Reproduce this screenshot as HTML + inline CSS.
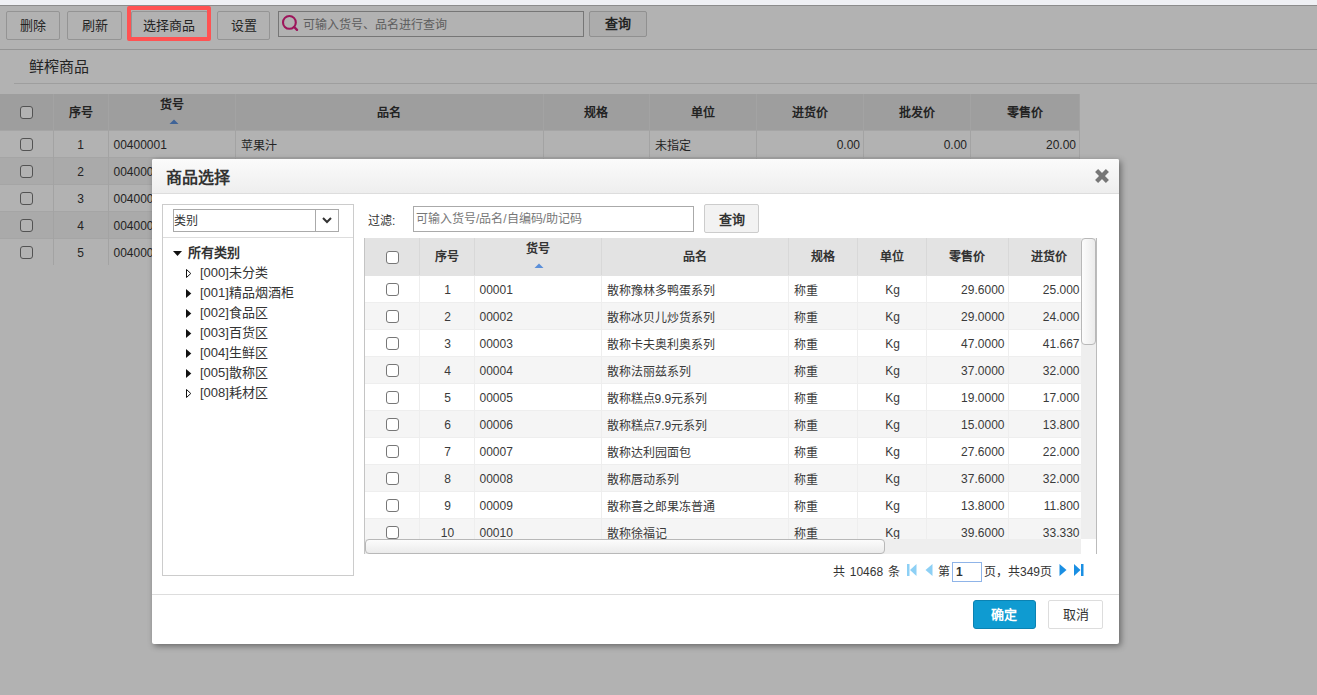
<!DOCTYPE html>
<html lang="zh-CN">
<head>
<meta charset="utf-8">
<style>
*{box-sizing:border-box;margin:0;padding:0}
html,body{width:1317px;height:695px;overflow:hidden;background:#eff0f4;font-family:"Liberation Sans",sans-serif;color:#333;font-size:13px}
.abs{position:absolute}
.line{position:absolute;height:1px}
#page{position:absolute;left:0;top:4px;width:1317px;height:691px;background:#fff;border-top:1px solid #eff0f4}
.tbtn{position:absolute;top:6px;height:29px;border:1px solid #d4d4d4;border-radius:2px;background:#fff;font-size:13px;text-align:center;line-height:27px;color:#333}
table{border-collapse:collapse;table-layout:fixed}
#bg{position:absolute;left:0;top:89px;width:1079px}
#bg td,#bg th{height:27px;border-right:1px solid #eaeaea;padding:0 5px;font-size:12px;white-space:nowrap;overflow:hidden}
#bg th{height:36px;background:#e3e3e3;font-weight:bold;color:#333;padding-bottom:0}
#bg td{padding-top:2px;border-top:1px solid #ececec}
#bg td.r{padding-right:2.5px}
#bg tr.e td{background:#f4f4f4}
.c{text-align:center}.r{text-align:right}
.cb{display:inline-block;width:13px;height:13px;border:1px solid #777;border-radius:3px;background:#fff;vertical-align:middle;position:relative}
td .cb{top:-1px}
#dt th .cb{top:2px}
#mask{position:absolute;left:0;top:5px;width:1317px;height:690px;background:rgba(0,0,0,.3)}
#red{position:absolute;left:127px;top:6px;width:84px;height:35px;border:4px solid #ff5252;border-radius:2px}
#dlg{position:absolute;left:152px;top:159px;width:967px;height:485px;background:#fff;border-radius:2px;box-shadow:2px 2px 6px rgba(0,0,0,.42)}
#hdr{position:absolute;left:0;top:0;width:967px;height:35px;border-bottom:1px solid #ddd;background:linear-gradient(#fbfbfb,#eeeeee);border-radius:2px 2px 0 0}
#title{position:absolute;left:14px;top:5px;font-size:16px;font-weight:bold;color:#333}
#lp{position:absolute;left:10px;top:45px;width:192px;height:372px;border:1px solid #ccc}
#sel{position:absolute;left:10px;top:4px;width:166px;height:23px;border:1px solid #aaa}
#sel .t{position:absolute;left:0;top:1px;font-size:12px}
#sel .dd{position:absolute;right:0;top:0;width:23px;height:21px;border-left:1px solid #aaa}
.tree{position:absolute;font-size:13px;white-space:nowrap}
#flt{position:absolute;left:216px;top:52px;font-size:12px}
#fin{position:absolute;left:261px;top:47px;width:281px;height:26px;border:1px solid #aaa}
#fin span{position:absolute;left:2px;top:2px;color:#777;font-size:12px}
#fbtn{position:absolute;left:552px;top:45px;width:55px;height:29px;border:1px solid #ccc;border-radius:2px;background:#f2f2f2;font-weight:bold;font-size:13px;text-align:center;line-height:29px}
#grid{position:absolute;left:213px;top:79px;width:716px;height:301px;overflow:hidden}
#dt{position:absolute;left:0;top:0;width:724px}
#dt td,#dt th{height:27px;border-right:1px solid #eee;border-bottom:1px solid #eee;padding:0 4px;font-size:12px;white-space:nowrap;overflow:hidden}
#dt th{height:37px;background:#e3e3e3;font-weight:bold;border-right:1px solid #d8d8d8;border-bottom:1px solid #e3e3e3;padding-bottom:2px}
#dt td{padding:2px 3px 0 5px;color:#3a3a3a}
#dt tr.e td{background:#f5f5f5}
#vs{position:absolute;left:929px;top:79px;width:15px;height:301px;background:#eee}
#vth{position:absolute;left:0;top:0;width:15px;height:107px;border:1px solid #b8b8b8;border-radius:4px;background:linear-gradient(to right,#fcfcfc,#ebebeb)}
#hs{position:absolute;left:213px;top:380px;width:716px;height:15px;background:#eee}
#hth{position:absolute;left:0;top:0;width:520px;height:15px;border:1px solid #b8b8b8;border-radius:4px;background:linear-gradient(#fcfcfc,#ebebeb)}
.pg{position:absolute;top:403px;font-size:12px;white-space:nowrap}
#pin{position:absolute;left:800px;top:403px;width:30px;height:20px;border:1px solid #8fb4e8}
#ok{position:absolute;left:821px;text-indent:-1px;top:441px;width:63px;height:29px;background:#0f9bd1;border:1px solid #0b82b2;border-radius:3px;color:#fff;font-weight:bold;font-size:13px;text-align:center;line-height:27px}
#cancel{position:absolute;left:896px;top:441px;width:55px;height:29px;background:#fff;border:1px solid #ddd;border-radius:2px;color:#333;font-size:13px;text-align:center;line-height:27px}
svg{position:absolute;overflow:visible}
</style>
</head>
<body>
<div id="page">
  <div class="line" style="left:0;top:0;width:1317px;background:#c9c9c9"></div>
  <div class="tbtn" style="left:6px;width:54px">删除</div>
  <div class="tbtn" style="left:67px;width:55px">刷新</div>
  <div class="tbtn" style="left:131px;width:77px;text-indent:-2px">选择商品</div>
  <div class="tbtn" style="left:217px;width:53px">设置</div>
  <div class="abs" style="left:278px;top:6px;width:306px;height:26px;border:1px solid #aaa;background:#fff"></div>
  <svg style="left:282px;top:10px" width="17" height="17" viewBox="0 0 17 17"><circle cx="7.4" cy="7.4" r="6.4" fill="none" stroke="#e11f83" stroke-width="2.1"/><path d="M12.2 12 L15 14.8" stroke="#e11f83" stroke-width="2.4" stroke-linecap="round"/></svg>
  <div class="abs" style="left:303px;top:10px;font-size:12px;color:#888">可输入货号、品名进行查询</div>
  <div class="tbtn" style="left:589px;width:58px;top:6px;height:26px;line-height:24px;font-weight:bold;background:#f6f6f6;border-color:#cfcfcf">查询</div>
  <div class="line" style="left:0;top:44px;width:1317px;background:#d4d4d4"></div>
  <div class="abs" style="left:29px;top:50px;font-size:15px">鲜榨商品</div>
  <div class="line" style="left:14px;top:78px;width:1303px;background:#e3e3e3"></div>
  <table id="bg">
    <colgroup><col style="width:53px"><col style="width:55px"><col style="width:127px"><col style="width:308px"><col style="width:106px"><col style="width:107px"><col style="width:107px"><col style="width:107px"><col style="width:109px"></colgroup>
    <tr><th><span class="cb"></span></th><th>序号</th><th style="padding-bottom:16px">货号</th><th>品名</th><th>规格</th><th>单位</th><th>进货价</th><th>批发价</th><th>零售价</th></tr>
<tr><td class="c"><span class="cb"></span></td><td class="c">1</td><td>00400001</td><td>苹果汁</td><td></td><td>未指定</td><td class="r">0.00</td><td class="r">0.00</td><td class="r">20.00</td></tr>
<tr class="e"><td class="c"><span class="cb"></span></td><td class="c">2</td><td>00400002</td><td></td><td></td><td></td><td class="r"></td><td class="r"></td><td class="r"></td></tr>
<tr><td class="c"><span class="cb"></span></td><td class="c">3</td><td>00400003</td><td></td><td></td><td></td><td class="r"></td><td class="r"></td><td class="r"></td></tr>
<tr class="e"><td class="c"><span class="cb"></span></td><td class="c">4</td><td>00400004</td><td></td><td></td><td></td><td class="r"></td><td class="r"></td><td class="r"></td></tr>
<tr><td class="c"><span class="cb"></span></td><td class="c">5</td><td>00400005</td><td></td><td></td><td></td><td class="r"></td><td class="r"></td><td class="r"></td></tr>

  </table>
  <svg style="left:169px;top:114px" width="10" height="6"><path d="M0.5 5 L5 0.5 L9.5 5 Z" fill="#5b8fd9"/></svg>
</div>
<div id="mask"></div>
<div id="red"></div>
<div id="dlg">
  <div id="hdr"><div id="title">商品选择</div>
    <svg style="left:943px;top:10px" width="14" height="14" viewBox="0 0 14 14"><path d="M1.6 1.6 L12.4 12.4 M12.4 1.6 L1.6 12.4" stroke="#777" stroke-width="4.3"/></svg>
  </div>
  <div id="lp">
    <div id="sel"><span class="t">类别</span><div class="dd"><svg style="left:6px;top:7px" width="10" height="7"><path d="M1 1 L5 5 L9 1" fill="none" stroke="#333" stroke-width="2"/></svg></div></div>
    <div class="line" style="left:0;top:32px;width:190px;background:#ddd"></div>
    <svg style="left:10px;top:46px" width="10" height="6"><path d="M0 0 L9 0 L4.5 5 Z" fill="#111"/></svg>
    <div class="tree" style="left:25px;top:37px;font-weight:bold">所有类别</div>
    <svg style="left:23px;top:64px" width="6" height="9"><path d="M0.5 0.5 L4.8 4.5 L0.5 8.5 Z" fill="#fff" stroke="#111" stroke-width="1"/></svg>
    <div class="tree" style="left:37px;top:57px">[000]未分类</div>
    <svg style="left:23px;top:84px" width="6" height="9"><path d="M0 0 L5.3 4.5 L0 9 Z" fill="#111"/></svg>
    <div class="tree" style="left:37px;top:77px">[001]精品烟酒柜</div>
    <svg style="left:23px;top:104px" width="6" height="9"><path d="M0 0 L5.3 4.5 L0 9 Z" fill="#111"/></svg>
    <div class="tree" style="left:37px;top:97px">[002]食品区</div>
    <svg style="left:23px;top:124px" width="6" height="9"><path d="M0 0 L5.3 4.5 L0 9 Z" fill="#111"/></svg>
    <div class="tree" style="left:37px;top:117px">[003]百货区</div>
    <svg style="left:23px;top:144px" width="6" height="9"><path d="M0 0 L5.3 4.5 L0 9 Z" fill="#111"/></svg>
    <div class="tree" style="left:37px;top:137px">[004]生鲜区</div>
    <svg style="left:23px;top:164px" width="6" height="9"><path d="M0 0 L5.3 4.5 L0 9 Z" fill="#111"/></svg>
    <div class="tree" style="left:37px;top:157px">[005]散称区</div>
    <svg style="left:23px;top:184px" width="6" height="9"><path d="M0.5 0.5 L4.8 4.5 L0.5 8.5 Z" fill="#fff" stroke="#111" stroke-width="1"/></svg>
    <div class="tree" style="left:37px;top:177px">[008]耗材区</div>
  </div>
  <div id="flt">过滤:</div>
  <div id="fin"><span>可输入货号/品名/自编码/助记码</span></div>
  <div id="fbtn">查询</div>
  <div id="grid">
    <table id="dt">
      <colgroup><col style="width:54px"><col style="width:55px"><col style="width:127px"><col style="width:187px"><col style="width:69px"><col style="width:69px"><col style="width:82px"><col style="width:81px"></colgroup>
      <tr><th style="padding-left:5px"><span class="cb"></span></th><th>序号</th><th style="padding-bottom:18px">货号</th><th>品名</th><th>规格</th><th>单位</th><th>零售价</th><th>进货价</th></tr>
<tr><td class="c"><span class="cb"></span></td><td class="c">1</td><td>00001</td><td>散称豫林多鸭蛋系列</td><td>称重</td><td class="c">Kg</td><td class="r">29.6000</td><td class="r" style="padding-right:9px">25.000</td></tr>
<tr class="e"><td class="c"><span class="cb"></span></td><td class="c">2</td><td>00002</td><td>散称冰贝儿炒货系列</td><td>称重</td><td class="c">Kg</td><td class="r">29.0000</td><td class="r" style="padding-right:9px">24.000</td></tr>
<tr><td class="c"><span class="cb"></span></td><td class="c">3</td><td>00003</td><td>散称卡夫奥利奥系列</td><td>称重</td><td class="c">Kg</td><td class="r">47.0000</td><td class="r" style="padding-right:9px">41.667</td></tr>
<tr class="e"><td class="c"><span class="cb"></span></td><td class="c">4</td><td>00004</td><td>散称法丽兹系列</td><td>称重</td><td class="c">Kg</td><td class="r">37.0000</td><td class="r" style="padding-right:9px">32.000</td></tr>
<tr><td class="c"><span class="cb"></span></td><td class="c">5</td><td>00005</td><td>散称糕点9.9元系列</td><td>称重</td><td class="c">Kg</td><td class="r">19.0000</td><td class="r" style="padding-right:9px">17.000</td></tr>
<tr class="e"><td class="c"><span class="cb"></span></td><td class="c">6</td><td>00006</td><td>散称糕点7.9元系列</td><td>称重</td><td class="c">Kg</td><td class="r">15.0000</td><td class="r" style="padding-right:9px">13.800</td></tr>
<tr><td class="c"><span class="cb"></span></td><td class="c">7</td><td>00007</td><td>散称达利园面包</td><td>称重</td><td class="c">Kg</td><td class="r">27.6000</td><td class="r" style="padding-right:9px">22.000</td></tr>
<tr class="e"><td class="c"><span class="cb"></span></td><td class="c">8</td><td>00008</td><td>散称唇动系列</td><td>称重</td><td class="c">Kg</td><td class="r">37.6000</td><td class="r" style="padding-right:9px">32.000</td></tr>
<tr><td class="c"><span class="cb"></span></td><td class="c">9</td><td>00009</td><td>散称喜之郎果冻普通</td><td>称重</td><td class="c">Kg</td><td class="r">13.8000</td><td class="r" style="padding-right:9px">11.800</td></tr>
<tr class="e"><td class="c"><span class="cb"></span></td><td class="c">10</td><td>00010</td><td>散称徐福记</td><td>称重</td><td class="c">Kg</td><td class="r">39.6000</td><td class="r" style="padding-right:9px">33.330</td></tr>

    </table>
  </div>
  <svg style="left:382px;top:104px" width="10" height="6"><path d="M0.5 5 L5 0.5 L9.5 5 Z" fill="#5b8fd9"/></svg>
  <div id="vs"><div id="vth"></div></div><div class="abs" style="left:944px;top:79px;width:1px;height:316px;background:#bbb"></div><div class="abs" style="left:212px;top:79px;width:1px;height:316px;background:#c4c4c4"></div>
  <div id="hs"><div id="hth"></div></div>
  <div class="pg" style="left:681px;word-spacing:1.4px">共 10468 条</div>
  <svg style="left:755px;top:405px" width="10" height="12"><rect x="0" y="0" width="2.5" height="12" fill="#8dd0f5"/><path d="M9.5 0 L3 6 L9.5 12 Z" fill="#8dd0f5"/></svg>
  <svg style="left:773px;top:405px" width="8" height="12"><path d="M7.5 0 L0.5 6 L7.5 12 Z" fill="#8dd0f5"/></svg>
  <div class="pg" style="left:786px">第</div>
  <div id="pin"><span style="position:absolute;left:3px;top:2px;font-size:12px;font-weight:bold">1</span></div>
  <div class="pg" style="left:832px">页，共349页</div>
  <svg style="left:907px;top:405px" width="8" height="12"><path d="M0.5 0 L7.5 6 L0.5 12 Z" fill="#1a8fe3"/></svg>
  <svg style="left:922px;top:405px" width="10" height="12"><path d="M0 0 L6.5 6 L0 12 Z" fill="#1a8fe3"/><rect x="7" y="0" width="2.5" height="12" fill="#1a8fe3"/></svg>
  <div class="line" style="left:0;top:435px;width:967px;background:#ddd"></div>
  <div id="ok">确定</div>
  <div id="cancel">取消</div>
</div>
</body>
</html>
